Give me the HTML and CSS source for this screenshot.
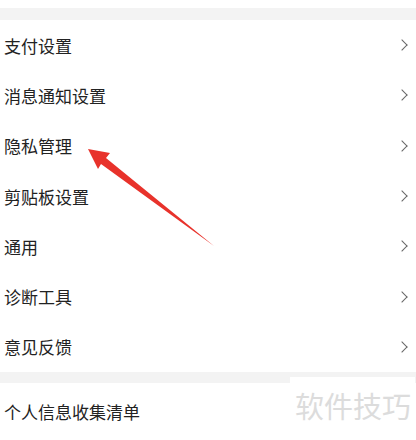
FILE: index.html
```html
<!DOCTYPE html>
<html lang="zh-CN">
<head>
    <meta charset="UTF-8">
    <title>设置</title>
    <meta name="viewport" content="width=device-width, initial-scale=1.0">
    <link rel="stylesheet" href="styles.css">
</head>
<body>
    <div class="page">
        <div class="gap top"></div>
        <ul class="list">
            <li><span>支付设置</span><i class="chev"></i></li>
            <li><span>消息通知设置</span><i class="chev"></i></li>
            <li><span>隐私管理</span><i class="chev"></i></li>
            <li><span>剪贴板设置</span><i class="chev"></i></li>
            <li><span>通用</span><i class="chev"></i></li>
            <li><span>诊断工具</span><i class="chev"></i></li>
            <li><span>意见反馈</span><i class="chev"></i></li>
        </ul>
        <div class="gap"></div>
        <ul class="list">
            <li class="last"><span>个人信息收集清单</span></li>
        </ul>

        <!-- 标注箭头 -->
        <svg class="arrow" width="416" height="440" viewBox="0 0 416 440">
            <polygon points="88,149 110,153 106,158 214,246 101,164 98,169" fill="#e8322b"/>
        </svg>
        <div class="mark">软件技巧</div>
    </div>
</body>
</html>
```

FILE: styles.css
```css
body { margin: 0; background: #fff; font-family: "Noto Sans CJK SC", "Noto Sans", sans-serif; color: #222; }
.page { position: relative; width: 416px; height: 440px; overflow: hidden; padding-top: 8px; box-sizing: border-box; }
.gap { height: 11px; background: #f3f3f3; }
.gap.top { height: 12px; }
.list { list-style: none; margin: 0; padding: 0; }
.list li { display: flex; align-items: center; justify-content: space-between; height: 50.3px; padding: 0 6px 0 4px; font-size: 17px; }
.list li.last { height: 56px; padding-bottom: 4px; }
.chev { width: 7px; height: 7px; border-right: 1.2px solid #666; border-top: 1.2px solid #666; transform: rotate(45deg); margin-right: 4px; }
.arrow { position: absolute; left: 0; top: 0; }
.mark { position: absolute; left: 290px; top: 377px; padding: 8px 4px 12px 5px; background: #fff; color: #dcdcdc; font-size: 29px; line-height: 40px; white-space: nowrap; }
```
